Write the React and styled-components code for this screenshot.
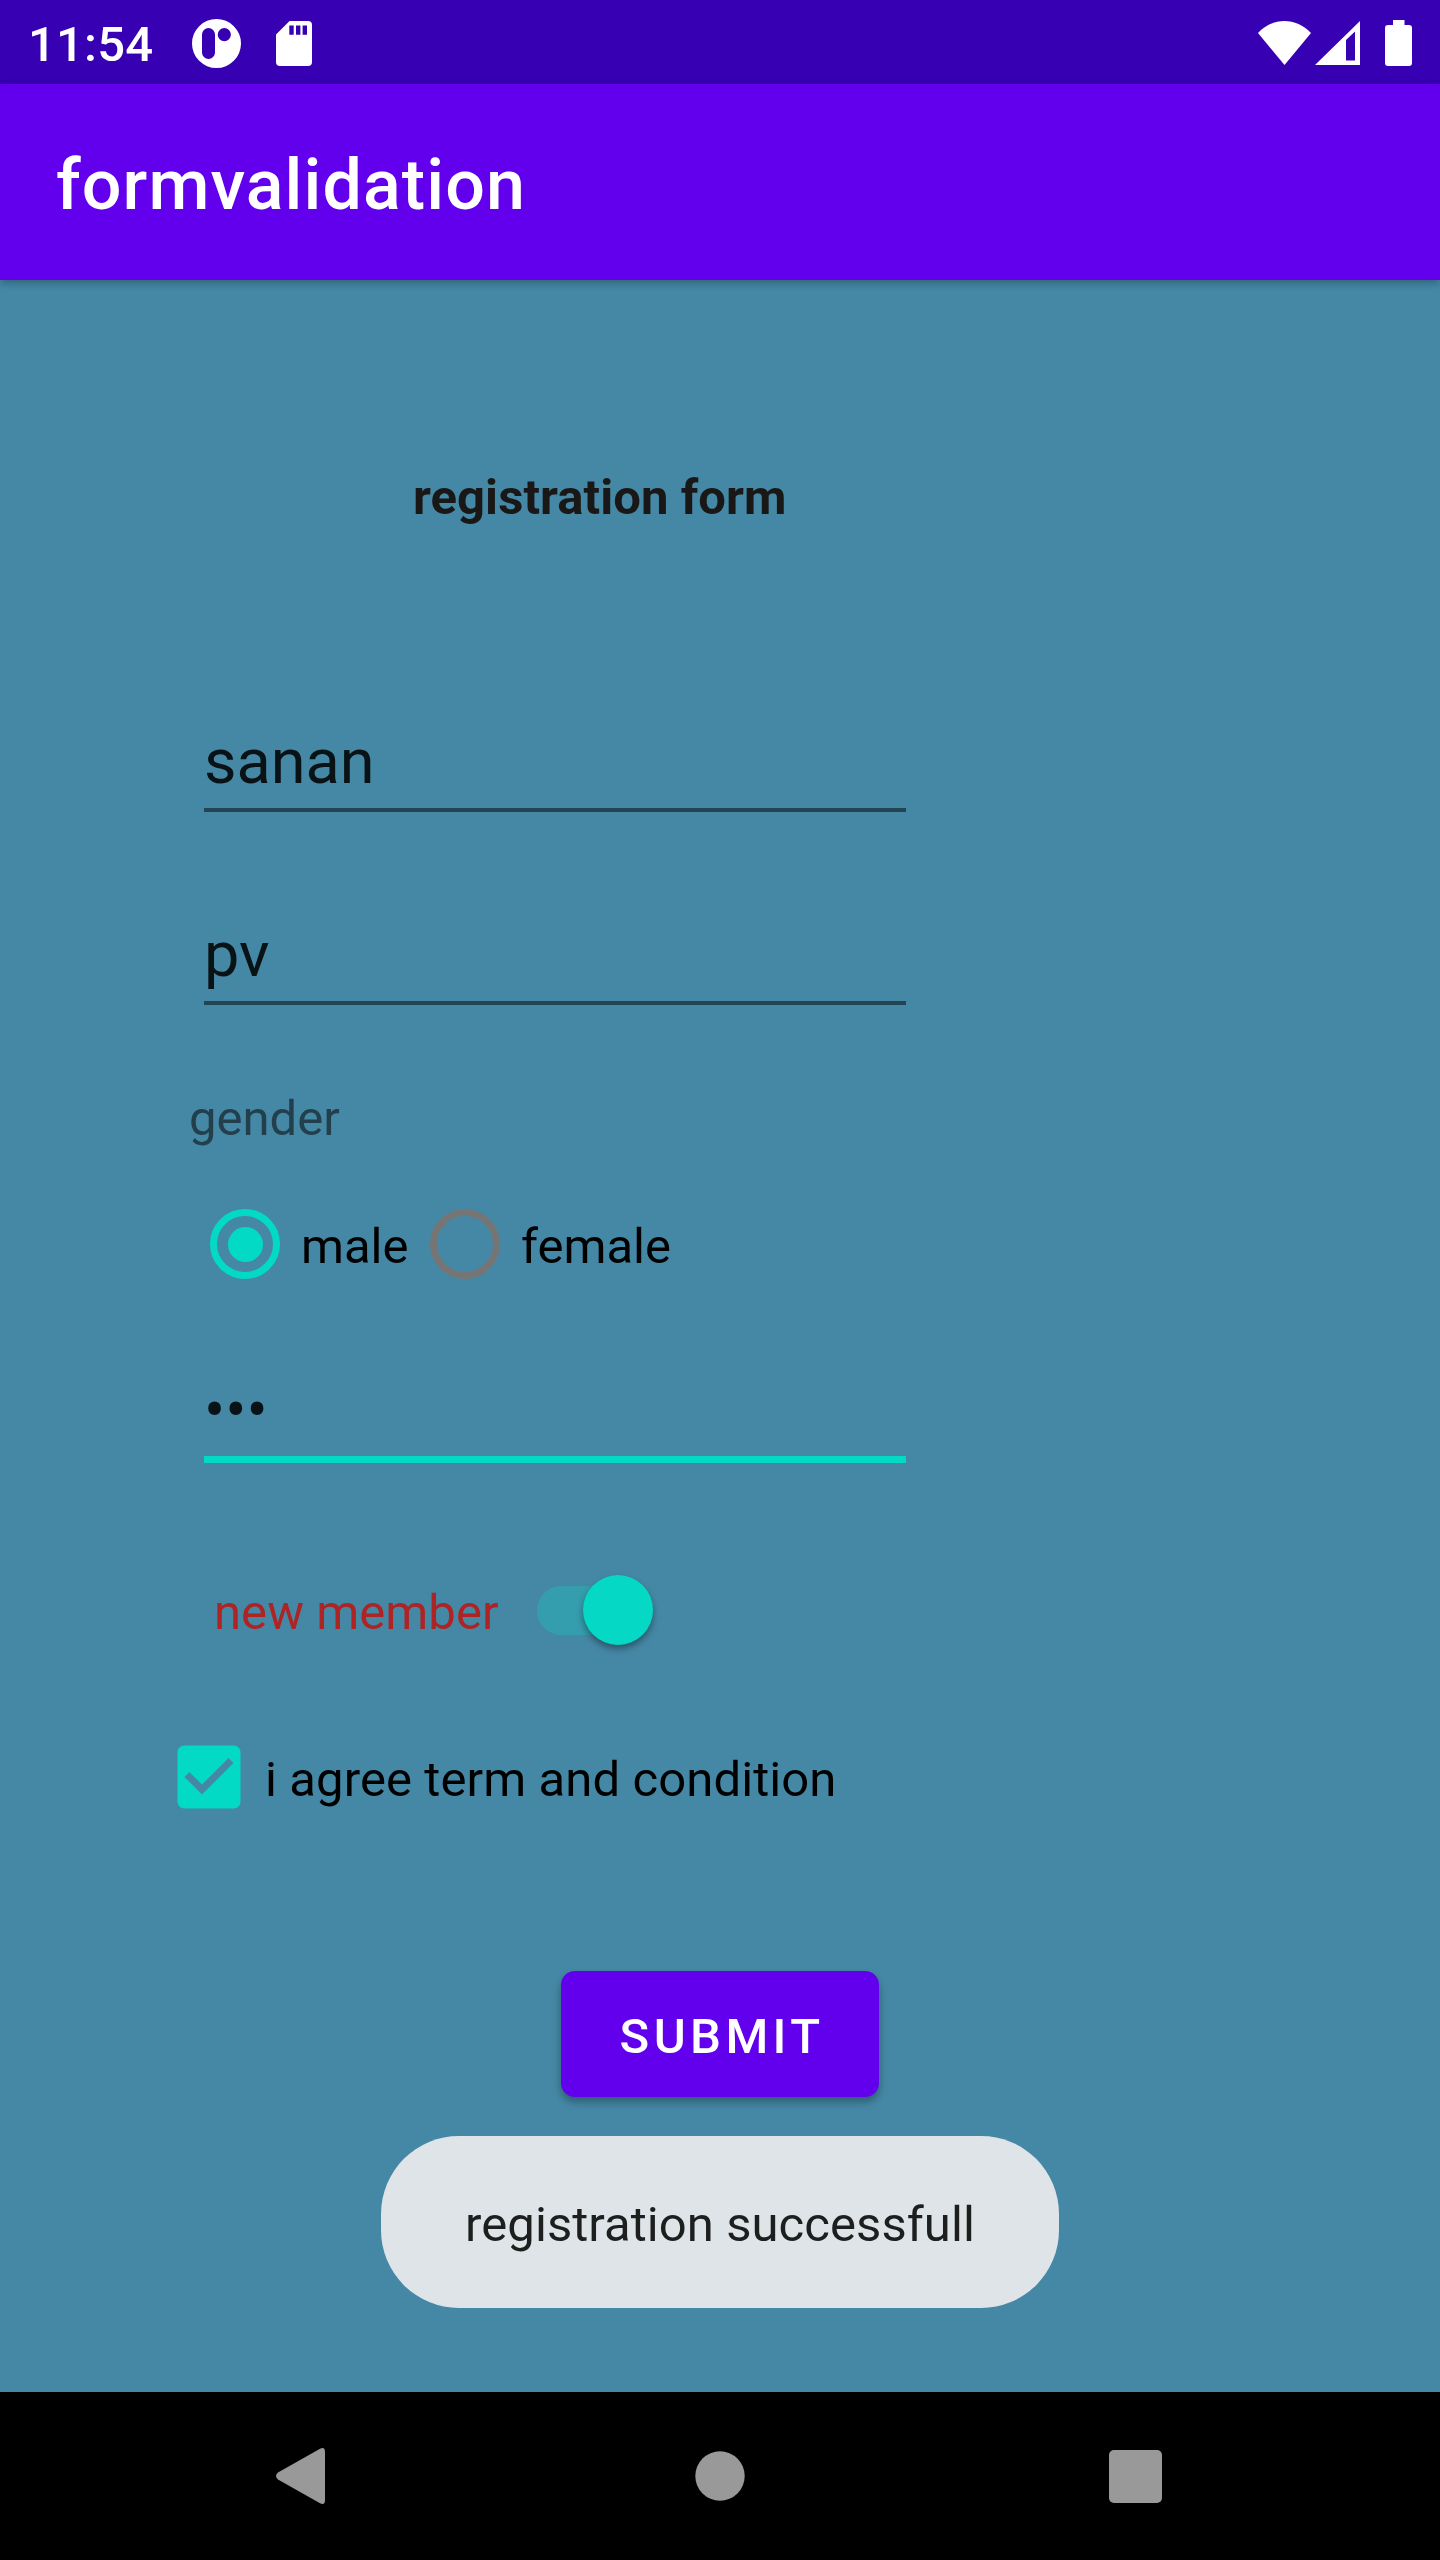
import React from 'react';
import styled, { createGlobalStyle } from 'styled-components';

const ACCENT = '#03dac5';

const GlobalStyle = createGlobalStyle`
  * { box-sizing: border-box; }
  body { margin: 0; }
`;

const Screen = styled.div`
  display: flex;
  flex-direction: column;
  width: 1440px;
  height: 2560px;
  overflow: hidden;
  background: #4588a6;
  font-family: Roboto, "Liberation Sans", sans-serif;
  font-size: 49px;
  line-height: 58px;
  color: #000;
`;

const StatusBar = styled.header`
  display: flex;
  flex: none;
  align-items: center;
  height: 84px;
  padding: 2px 28px 0 28px;
  background: #3700b3;
  color: #fff;
`;

const Clock = styled.span`
  width: 164px;
  font-weight: 500;
  letter-spacing: 0.2px;
  padding-top: 3px;
`;

const Glyph = styled.svg`
  display: block;
  flex: none;
  fill: ${(p) => p.$fill || '#fff'};
  margin-left: ${(p) => p.$gap || 0}px;
`;

const Spacer = styled.div`
  flex: 1;
`;

const AppBar = styled.div`
  display: flex;
  flex: none;
  align-items: center;
  height: 196px;
  padding: 6px 56px 0;
  background: #6200ee;
  color: #fff;
  box-shadow: 0 3px 8px rgba(0, 0, 0, 0.28);
`;

const AppTitle = styled.h1`
  margin: 0;
  font-size: 70px;
  line-height: 82px;
  font-weight: 500;
  letter-spacing: 0.0155em;
`;

const Form = styled.main`
  display: flex;
  flex: 1;
  flex-direction: column;
  align-items: flex-start;
  padding-top: 189px;
`;

const Heading = styled.h2`
  margin: 0 0 0 413px;
  font-size: 49px;
  font-weight: 700;
  letter-spacing: 0.06px;
  color: #191817;
`;

const Field = styled.div`
  width: 702px;
  height: ${(p) => (p.$focused ? 91 : 88)}px;
  margin: ${(p) => p.$top}px 0 0 204px;
  padding-top: ${(p) => (p.$focused ? 2 : 1)}px;
  border-bottom: ${(p) => (p.$focused ? `7px solid ${ACCENT}` : '4px solid #234453')};
  font-size: 63px;
  line-height: 74px;
  color: #091215;
`;

const Caption = styled.div`
  margin: 85px 0 0 189px;
  color: #233f4c;
`;

const RadioGroup = styled.div`
  display: flex;
  align-items: center;
  height: 70px;
  margin: 61px 0 0 210px;
`;

const RadioMark = styled.span`
  display: grid;
  place-items: center;
  width: 70px;
  height: 70px;
  border: 7px solid ${(p) => (p.$checked ? ACCENT : '#757575')};
  border-radius: 50%;

  &::after {
    content: '';
    width: 35px;
    height: 35px;
    border-radius: 50%;
    background: ${(p) => (p.$checked ? ACCENT : 'transparent')};
  }
`;

const RadioLabel = styled.label`
  display: flex;
  align-items: center;
  width: ${(p) => p.$width}px;
  gap: 21px;
`;

const LabelText = styled.span`
  padding-top: 5px;
  white-space: nowrap;
`;

const SwitchRow = styled.div`
  display: flex;
  align-items: center;
  height: 70px;
  margin: 112px 0 0 214px;
`;

const SwitchText = styled.span`
  width: 323px;
  padding-top: 5px;
  letter-spacing: 0.06px;
  color: #ac2524;
`;

const Track = styled.span`
  display: flex;
  align-items: center;
  justify-content: flex-end;
  width: 116px;
  height: 49px;
  border-radius: 25px;
  background: #359eae;
`;

const Thumb = styled.span`
  width: 70px;
  height: 70px;
  border-radius: 50%;
  background: #05d8c4;
  box-shadow: 0 4px 7px rgba(0, 0, 0, 0.38);
`;

const CheckRow = styled.label`
  display: flex;
  align-items: center;
  height: 84px;
  margin: 90px 0 0 167px;
`;

const CheckText = styled.span`
  margin-left: 14px;
  padding-top: 5px;
  letter-spacing: 0.1px;
`;

const Submit = styled.button`
  align-self: center;
  width: 318px;
  height: 126px;
  margin: 152px 0 0;
  padding: 6px 0 0 4px;
  border: 0;
  border-radius: 14px;
  background: #6200ee;
  color: #fff;
  font: 500 49px/58px Roboto, "Liberation Sans", sans-serif;
  letter-spacing: 0.0893em;
  box-shadow: 0 5px 8px rgba(0, 0, 0, 0.32);
`;

const Toast = styled.div`
  display: flex;
  align-self: center;
  align-items: center;
  justify-content: center;
  width: 678px;
  height: 172px;
  margin-top: 39px;
  padding-top: 5px;
  border-radius: 78px;
  background: #dfe4e8;
  letter-spacing: 0.06px;
  color: #1d1f1f;
`;

const NavBar = styled.nav`
  display: flex;
  flex: none;
  align-items: center;
  height: 168px;
  padding-left: 275px;
  background: #000;
`;

export default function App() {
  return (
    <Screen>
      <GlobalStyle />
      <StatusBar>
        <Clock>11:54</Clock>
        <Glyph width="49" height="49" viewBox="0 0 49 49">
          <path
            fillRule="evenodd"
            d="M24.5 0a24.5 24.5 0 1 1 0 49a24.5 24.5 0 1 1 0-49ZM16.5 9A6.5 6.5 0 0 0 10 15.500V33.500A6.500 6.500 0 0 0 23 33.500V15.500A6.500 6.500 0 0 0 16.500 9ZM32.300 9a6.600 6.600 0 1 0 0 13.200a6.600 6.600 0 1 0 0-13.200Z"
          />
        </Glyph>
        <Glyph $gap={34.5} width="36" height="45" viewBox="0 0 36 45">
          <path
            fillRule="evenodd"
            d="M13.500 0H32a4 4 0 0 1 4 4v37a4 4 0 0 1-4 4H4a4 4 0 0 1-4-4V13.500ZM13.300 4.500v9.300h4.400V4.500ZM20 4.500v9.300h4.400V4.500ZM26.600 4.500v9.300H31V4.500Z"
          />
        </Glyph>
        <Spacer />
        <Glyph width="53" height="44" viewBox="0 0 53 44">
          <path d="M0 12C15-4 38-4 53 12L26.500 44Z" />
        </Glyph>
        <Glyph $gap={4} width="45" height="44" viewBox="0 0 45 44">
          <path fillRule="evenodd" d="M45 0V44H0ZM31 19V39.500H40V10.500Z" />
        </Glyph>
        <Glyph $gap={25} width="27" height="46" viewBox="0 0 27 46">
          <path d="M8 0H19.500V5H24a3 3 0 0 1 3 3V43a3 3 0 0 1-3 3H3a3 3 0 0 1-3-3V8a3 3 0 0 1 3-3H8Z" />
        </Glyph>
      </StatusBar>
      <AppBar>
        <AppTitle>formvalidation</AppTitle>
      </AppBar>
      <Form>
        <Heading>registration form</Heading>
        <Field $top={197}>sanan</Field>
        <Field $top={105}>pv</Field>
        <Caption>gender</Caption>
        <RadioGroup>
          <RadioLabel $width={220}>
            <RadioMark $checked />
            <LabelText>male</LabelText>
          </RadioLabel>
          <RadioLabel $width={260}>
            <RadioMark />
            <LabelText>female</LabelText>
          </RadioLabel>
        </RadioGroup>
        <Field $focused $top={93}>•••</Field>
        <SwitchRow>
          <SwitchText>new member</SwitchText>
          <Track>
            <Thumb />
          </Track>
        </SwitchRow>
        <CheckRow>
          <Glyph $fill={ACCENT} width="84" height="84" viewBox="0 0 24 24">
            <path d="M19 3H5c-1.110 0-2 .9-2 2v14c0 1.100.89 2 2 2h14c1.110 0 2-.9 2-2V5c0-1.100-.89-2-2-2zm-9 14l-5-5 1.410-1.410L10 14.170l7.590-7.590L19 8l-9 9z" />
          </Glyph>
          <CheckText>i agree term and condition</CheckText>
        </CheckRow>
        <Submit>SUBMIT</Submit>
        <Toast>registration successfull</Toast>
      </Form>
      <NavBar>
        <Glyph $fill="#999" width="50" height="56" viewBox="0 0 50 56">
          <path d="M3 24.500L45 .8Q50-1.500 50 4V52Q50 57.500 45 55.200L3 31.500Q-1 28 3 24.500Z" />
        </Glyph>
        <Glyph $fill="#999" $gap={370} width="50" height="50" viewBox="0 0 50 50">
          <circle cx="25" cy="25" r="24.700" />
        </Glyph>
        <Glyph $fill="#999" $gap={363.5} width="53" height="53" viewBox="0 0 53 53">
          <rect width="53" height="53" rx="5" />
        </Glyph>
      </NavBar>
    </Screen>
  );
}
